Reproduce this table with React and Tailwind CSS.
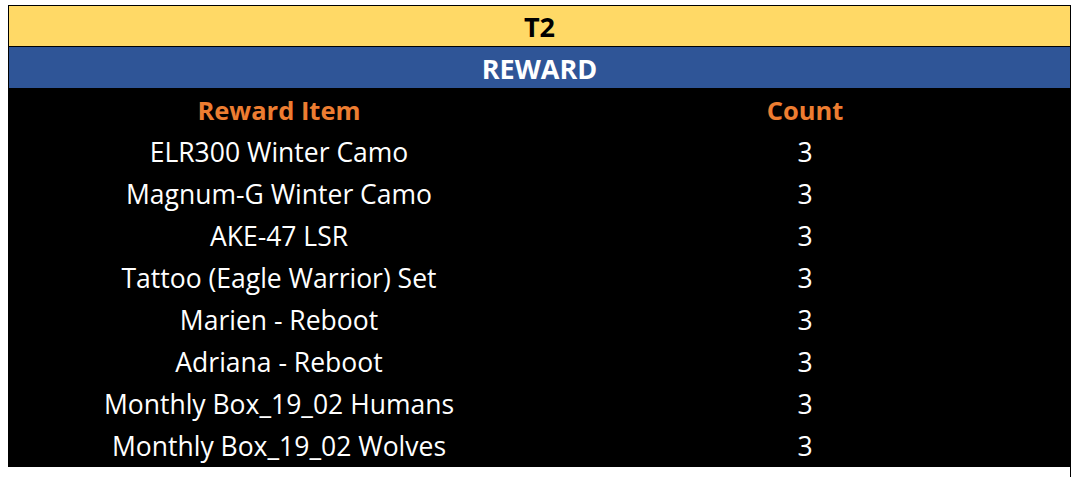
export default function App() {
  const rows = [
    "ELR300 Winter Camo",
    "Magnum-G Winter Camo",
    "AKE-47 LSR",
    "Tattoo (Eagle Warrior) Set",
    "Marien - Reboot",
    "Adriana - Reboot",
    "Monthly Box_19_02 Humans",
    "Monthly Box_19_02 Wolves",
  ];
  const font = { fontFamily: '"Open Sans", "Noto Sans", sans-serif' };
  return (
    <div className="w-[1075px] h-[477px] bg-white relative" style={font}>
      <div className="absolute left-[1070px] top-[5px] w-px h-[472px] bg-black" />
      <div className="pt-[5px] pl-[8px]">
        <div className="w-[1063px] border border-black">
          <div className="h-[41px] bg-[#FFD966] border-b border-black flex items-center justify-center pt-[3px] text-[27px] font-bold text-black">
            T2
          </div>
          <div className="h-[41px] bg-[#2F5597] flex items-center justify-center pt-[3px] text-[27px] font-bold text-white">
            REWARD
          </div>
          <div className="bg-black">
            <div className="flex h-[42px] items-center pt-[3px] text-[25.5px] font-bold text-[#ED7D31]">
              <div className="w-[540px] text-center">Reward Item</div>
              <div className="w-[512px] text-center">Count</div>
            </div>
            {rows.map((r) => (
              <div key={r} className="flex h-[42px] items-center pt-[3px] text-[26.5px] text-white">
                <div className="w-[540px] text-center">{r}</div>
                <div className="w-[512px] text-center">3</div>
              </div>
            ))}
          </div>
        </div>
      </div>
    </div>
  );
}
